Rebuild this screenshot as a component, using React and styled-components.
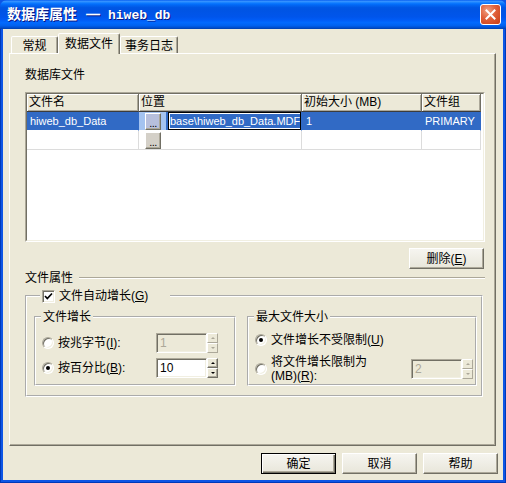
import React from "react";
import styled, { createGlobalStyle, css } from "styled-components";

const GlobalStyle = createGlobalStyle`
  * { box-sizing: border-box; }
  html, body { margin: 0; padding: 0; background: #0d55e5; }
  body {
    font-family: "Liberation Sans", "Noto Sans CJK SC", sans-serif;
    font-size: 12px;
    color: #000;
  }
`;

const face = "#ECE9D8";
const shadow = "#ACA899";
const darkShadow = "#716F64";
const light = "#F1EFE2";
const highlight = "#316AC5";

const COLUMNS = "112px 163px 120px 59px";

const files = [
  { name: "hiweb_db_Data", path: "base\\hiweb_db_Data.MDF", size: "1", group: "PRIMARY", selected: true },
  { name: "", path: "", size: "", group: "", selected: false },
];

export default function App() {
  return (
    <>
      <GlobalStyle />
      <Window>
        <TitleBar>
          <Title>
            数据库属性<Dash>—</Dash><Mono>hiweb_db</Mono>
          </Title>
          <CloseButton aria-label="关闭">
            <svg width="11" height="11" viewBox="0 0 11 11">
              <path d="M1.5 1.5 L9.5 9.5 M9.5 1.5 L1.5 9.5" stroke="#fff" strokeWidth="2" strokeLinecap="square" />
            </svg>
          </CloseButton>
        </TitleBar>
        <Frame>
          <Body>
            <TabStrip>
              <Tab $w={47}>常规</Tab>
              <Tab $w={62} $active>数据文件</Tab>
              <Tab $w={58}>事务日志</Tab>
            </TabStrip>

            <Panel>
              <Caption>数据库文件</Caption>
              <GridFrame>
                <GridInner>
                  <HeaderRow>
                    <HeaderCell>文件名</HeaderCell>
                    <HeaderCell>位置</HeaderCell>
                    <HeaderCell>初始大小 (MB)</HeaderCell>
                    <HeaderCell>文件组</HeaderCell>
                  </HeaderRow>
                  {files.map((f, i) => (
                    <Row key={i}>
                      <Cell $selected={f.selected}>{f.name}</Cell>
                      <Cell $selected={f.selected} $flush>
                        <PickerArea $selected={f.selected}>
                          <EllipsisButton $selected={f.selected}>...</EllipsisButton>
                        </PickerArea>
                        {f.selected && (
                          <Editor>
                            <EditorText>{f.path}</EditorText>
                          </Editor>
                        )}
                      </Cell>
                      <Cell $selected={f.selected} $pad={4}>{f.size}</Cell>
                      <Cell $selected={f.selected}>{f.group}</Cell>
                    </Row>
                  ))}
                </GridInner>
              </GridFrame>

              <DeleteRow>
                <Button>删除(<u>E</u>)</Button>
              </DeleteRow>

              <Heading>
                <span>文件属性</span>
                <Etch />
              </Heading>

              <Group $outer>
                <Legend $outer>
                  <CheckBox>
                    <svg width="9" height="9" viewBox="0 0 9 9">
                      <path d="M1 4 L3.3 6.5 L8 1.5" fill="none" stroke="#000" strokeWidth="1.7" />
                    </svg>
                  </CheckBox>
                  <span>文件自动增长(<u>G</u>)</span>
                </Legend>
                <Groups>
                  <Group $width={202}>
                    <Legend>文件增长</Legend>
                    <GroupBody $pr={16} $pb={6}>
                      <OptionRow>
                        <Option>
                          <Radio />
                          <span>按兆字节(<u>I</u>):</span>
                        </Option>
                        <SpinBox value="1" disabled />
                      </OptionRow>
                      <OptionRow>
                        <Option>
                          <Radio $checked />
                          <span>按百分比(<u>B</u>):</span>
                        </Option>
                        <SpinBox value="10" />
                      </OptionRow>
                    </GroupBody>
                  </Group>
                  <Group $grow>
                    <Legend>最大文件大小</Legend>
                    <GroupBody $pr={2} $pb={1}>
                      <OptionRow $h={14}>
                        <Option>
                          <Radio $checked />
                          <span>文件增长不受限制(<u>U</u>)</span>
                        </Option>
                      </OptionRow>
                      <OptionRow $h={28} $mt={8}>
                        <Option>
                          <Radio />
                          <span>
                            将文件增长限制为
                            <br />
                            (MB)(<u>R</u>):
                          </span>
                        </Option>
                        <SpinBox value="2" disabled />
                      </OptionRow>
                    </GroupBody>
                  </Group>
                </Groups>
              </Group>
            </Panel>

            <ButtonRow>
              <Button $default>确定</Button>
              <Button>取消</Button>
              <Button>帮助</Button>
            </ButtonRow>
          </Body>
        </Frame>
      </Window>
    </>
  );
}

function SpinBox({ value, disabled }) {
  return (
    <Spin>
      <SpinField $disabled={disabled}>{value}</SpinField>
      <Spinner>
        <SpinButton $disabled={disabled}>
          <Arrow $up $disabled={disabled} />
        </SpinButton>
        <SpinButton $disabled={disabled}>
          <Arrow $disabled={disabled} />
        </SpinButton>
      </Spinner>
    </Spin>
  );
}

const raised = css`
  border: 1px solid;
  border-color: #fff ${darkShadow} ${darkShadow} #fff;
  box-shadow: inset -1px -1px 0 ${shadow};
`;

const sunken = css`
  border: 1px solid;
  border-color: ${shadow} #fff #fff ${shadow};
  box-shadow: inset 1px 1px 0 ${darkShadow}, inset -1px -1px 0 ${light};
`;

const Window = styled.div`
  width: 506px;
  height: 483px;
  display: flex;
  flex-direction: column;
`;

const TitleBar = styled.div`
  height: 29px;
  flex: none;
  display: flex;
  align-items: center;
  padding: 0 5px 0 7px;
  border-radius: 7px 7px 0 0;
  background: linear-gradient(
    #0058ee 0%,
    #3a93ff 4%,
    #288eff 7%,
    #127dff 10%,
    #036ffc 14%,
    #0262ee 20%,
    #0057e5 26%,
    #0054e3 32%,
    #0055eb 58%,
    #005bf5 68%,
    #026afe 78%,
    #0062ef 88%,
    #0052d6 94%,
    #0040ab 100%
  );
`;

const Title = styled.div`
  color: #fff;
  font-family: "Noto Sans CJK SC", sans-serif;
  font-weight: bold;
  font-size: 14px;
  line-height: 16px;
  text-shadow: 1px 1px 0 #0a1883;
  white-space: nowrap;
`;

const Dash = styled.span`
  margin: 0 8px 0 9px;
  font-family: "Liberation Sans", sans-serif;
`;

const Mono = styled.span`
  font-family: "Liberation Mono", monospace;
  font-size: 13px;
`;

const CloseButton = styled.button`
  margin-left: auto;
  width: 21px;
  height: 21px;
  padding: 0;
  display: flex;
  align-items: center;
  justify-content: center;
  border: 1px solid #fff;
  border-radius: 3px;
  background: radial-gradient(circle at 35% 30%, #f0a183 0%, #e0603a 45%, #c83c14 100%);
`;

const Frame = styled.div`
  flex: 1;
  display: flex;
  padding: 0 3px 3px;
  background: #0d55e5;
  box-shadow: inset 1px 0 0 #0039b8, inset -1px 0 0 #0039b8, inset 0 -1px 0 #0039b8;
`;

const Body = styled.div`
  flex: 1;
  display: flex;
  flex-direction: column;
  background: ${face};
  padding: 4px 7px 6px 6px;
`;

const TabStrip = styled.div`
  height: 20px;
  flex: none;
  display: flex;
  align-items: flex-end;
  padding-left: 2px;
`;

const Tab = styled.div`
  width: ${(p) => p.$w}px;
  height: ${(p) => (p.$active ? 21 : 17)}px;
  margin-bottom: ${(p) => (p.$active ? -1 : 0)}px;
  position: relative;
  z-index: ${(p) => (p.$active ? 1 : 0)};
  display: flex;
  align-items: center;
  justify-content: center;
  background: ${face};
  border: 1px solid;
  border-bottom: none;
  border-color: #fff ${darkShadow} transparent #fff;
  border-radius: 2px 2px 0 0;
  box-shadow: inset -1px 0 0 ${shadow};
  font-size: 12px;
  line-height: 14px;
  padding-top: ${(p) => (p.$active ? 0 : 1)}px;
`;

const Panel = styled.div`
  flex: 1;
  display: flex;
  flex-direction: column;
  border: 1px solid;
  border-color: #fff ${darkShadow} ${darkShadow} #fff;
  box-shadow: inset -1px -1px 0 ${shadow};
  padding: 14px 10px 0 15px;
`;

const Caption = styled.div`
  line-height: 14px;
`;

const GridFrame = styled.div`
  margin-top: 10px;
  height: 150px;
  border: 1px solid;
  border-color: ${shadow} #fff #fff ${shadow};
`;

const GridInner = styled.div`
  height: 100%;
  overflow: hidden;
  background: #fff;
  border: 1px solid;
  border-color: ${darkShadow} ${light} ${light} ${darkShadow};
`;

const HeaderRow = styled.div`
  display: grid;
  grid-template-columns: ${COLUMNS};
  height: 18px;
`;

const HeaderCell = styled.div`
  background: ${face};
  border-right: 1px solid ${darkShadow};
  border-bottom: 1px solid #3c3c3c;
  box-shadow: inset 1px 1px 0 #fff, inset -1px -1px 0 ${shadow};
  padding-left: 2px;
  line-height: 16px;
  white-space: nowrap;
  overflow: hidden;
`;

const Row = styled.div`
  display: grid;
  grid-template-columns: ${COLUMNS};
  height: 19px;
`;

const Cell = styled.div`
  display: flex;
  align-items: center;
  overflow: hidden;
  white-space: nowrap;
  padding-left: ${(p) => (p.$flush ? 0 : p.$pad ?? 3)}px;
  font-size: 11px;
  color: ${(p) => (p.$selected ? "#fff" : "#000")};
  background: ${(p) => (p.$selected ? highlight : "#fff")};
  border-right: 1px solid ${(p) => (p.$selected ? highlight : "#dcdcdc")};
  border-bottom: 1px solid ${(p) => (p.$selected ? "#fff" : "#dcdcdc")};
`;

const PickerArea = styled.div`
  width: 27px;
  height: 100%;
  flex: none;
  display: flex;
  align-items: center;
  padding-left: 6px;
  background: ${(p) => (p.$selected ? "#a4c3f0" : "transparent")};
`;

const EllipsisButton = styled.div`
  width: 16px;
  height: 17px;
  ${raised};
  background: ${(p) => (p.$selected ? "#b7bfdc" : "#d4d0c8")};
  color: #000;
  font-size: 11px;
  line-height: 18px;
  text-align: center;
  letter-spacing: -0.5px;
`;

const Editor = styled.div`
  margin-left: 2px;
  width: 133px;
  height: 18px;
  flex: none;
  overflow: hidden;
  border: 1px solid #000;
  background: #fff;
  padding: 1px 0 1px 1px;
  display: flex;
`;

const EditorText = styled.span`
  background: ${highlight};
  color: #fff;
  font-size: 11px;
  line-height: 14px;
  white-space: nowrap;
  border-right: 1px solid #e8a040;
`;

const DeleteRow = styled.div`
  margin-top: 6px;
  display: flex;
  justify-content: flex-end;
  padding-right: 1px;
`;

const Button = styled.button`
  width: 75px;
  height: 21px;
  padding: 0;
  font: inherit;
  font-size: 12px;
  line-height: 14px;
  color: #000;
  background: linear-gradient(#f6f5f0, #e8e6da);
  ${raised};
  ${(p) =>
    p.$default &&
    css`
      border: 1px solid #000;
      box-shadow: inset 1px 1px 0 #fff, inset -1px -1px 0 ${darkShadow}, inset -2px -2px 0 ${shadow};
    `}
  u {
    text-decoration-thickness: 1px;
  }
`;

const Heading = styled.div`
  margin-top: 2px;
  display: flex;
  align-items: center;
  gap: 6px;
  line-height: 14px;
`;

const Etch = styled.div`
  flex: 1;
  height: 2px;
  border-top: 1px solid ${shadow};
  border-bottom: 1px solid #fff;
`;

const Group = styled.fieldset`
  margin: 0;
  min-width: 0;
  border: 2px groove #fff;
  padding: 0;
  ${(p) =>
    p.$outer &&
    css`
      margin: 4px 2px 0 0;
      padding: 7px 4px 9px 7px;
    `}
  ${(p) => p.$width && css`width: ${p.$width}px; flex: none;`}
  ${(p) => p.$grow && css`flex: 1;`}
`;

const Legend = styled.legend`
  display: flex;
  align-items: center;
  gap: 4px;
  line-height: 14px;
  margin-left: ${(p) => (p.$outer ? 6 : 5)}px;
  padding: 0 ${(p) => (p.$outer ? 22 : 2)}px 0 2px;
`;

const CheckBox = styled.span`
  width: 13px;
  height: 13px;
  flex: none;
  display: flex;
  align-items: center;
  justify-content: center;
  background: #fff;
  ${sunken};
`;

const Groups = styled.div`
  display: flex;
  gap: 11px;
`;

const GroupBody = styled.div`
  display: flex;
  flex-direction: column;
  gap: 5px;
  padding: 9px ${(p) => p.$pr}px ${(p) => p.$pb}px 6px;
`;

const OptionRow = styled.div`
  display: flex;
  align-items: center;
  justify-content: space-between;
  height: ${(p) => p.$h ?? 20}px;
  margin-top: ${(p) => (p.$mt ? p.$mt - 5 : 0)}px;
`;

const Option = styled.label`
  display: flex;
  align-items: center;
  gap: 4px;
  line-height: 14px;
  white-space: nowrap;
`;

const Radio = styled.span`
  position: relative;
  width: 12px;
  height: 12px;
  flex: none;
  border-radius: 50%;
  background: #fff;
  border: 1px solid;
  border-color: ${shadow} #fff #fff ${shadow};
  box-shadow: inset 1px 1px 0 ${darkShadow}, inset -1px -1px 0 ${light};
  ${(p) =>
    p.$checked &&
    css`
      &::after {
        content: "";
        position: absolute;
        left: 3px;
        top: 3px;
        width: 4px;
        height: 4px;
        border-radius: 50%;
        background: #000;
      }
    `}
`;

const Spin = styled.div`
  display: flex;
  flex: none;
`;

const SpinField = styled.div`
  width: 51px;
  height: 20px;
  ${sunken};
  background: ${(p) => (p.$disabled ? face : "#fff")};
  color: ${(p) => (p.$disabled ? shadow : "#000")};
  padding: 0 3px;
  line-height: 18px;
  font-size: 12px;
`;

const Spinner = styled.div`
  width: 11px;
  height: 20px;
  display: flex;
  flex-direction: column;
`;

const SpinButton = styled.div`
  flex: 1;
  display: flex;
  align-items: center;
  justify-content: center;
  background: ${face};
  ${(p) =>
    p.$disabled
      ? css`
          border: 1px solid;
          border-color: #fff ${shadow} ${shadow} #fff;
        `
      : raised};
`;

const Arrow = styled.span`
  width: 0;
  height: 0;
  border-left: 2px solid transparent;
  border-right: 2px solid transparent;
  ${(p) =>
    p.$up
      ? css`border-bottom: 2px solid ${p.$disabled ? shadow : "#000"};`
      : css`border-top: 2px solid ${p.$disabled ? shadow : "#000"};`}
`;

const ButtonRow = styled.div`
  flex: none;
  display: flex;
  justify-content: flex-end;
  gap: 6px;
  margin: 7px -2px 0 0;
`;
